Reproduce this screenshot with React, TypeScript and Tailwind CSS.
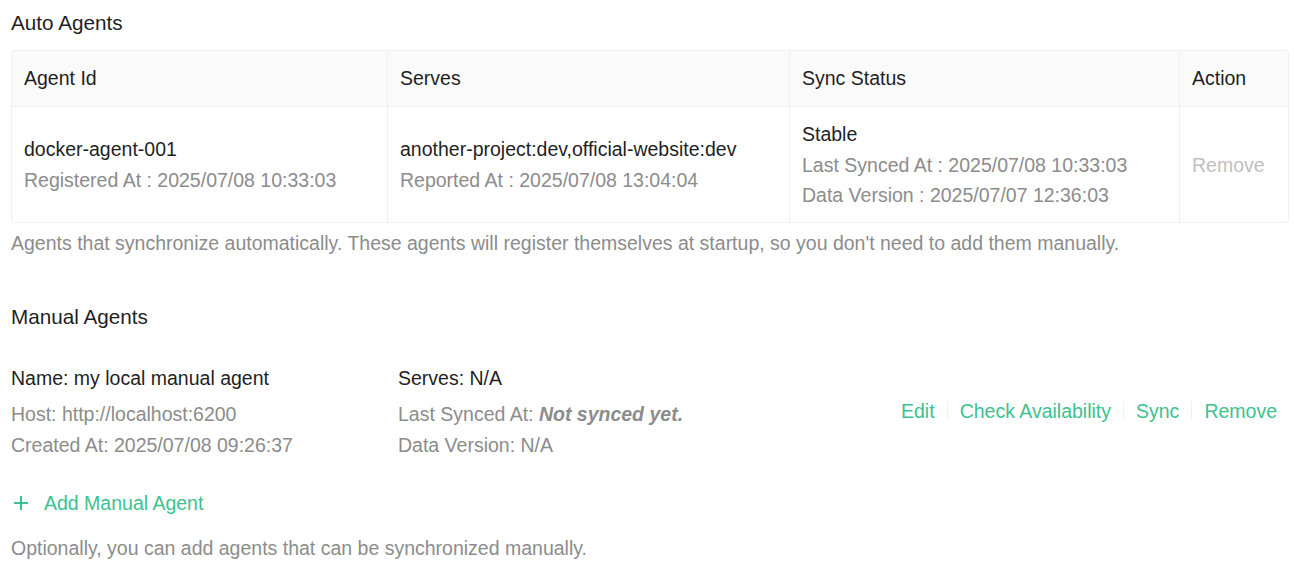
const font = { fontFamily: "'Liberation Sans', Arial, sans-serif" };

const autoAgents = [
  {
    id: "docker-agent-001",
    registeredAt: "2025/07/08 10:33:03",
    serves: "another-project:dev,official-website:dev",
    reportedAt: "2025/07/08 13:04:04",
    status: "Stable",
    lastSyncedAt: "2025/07/08 10:33:03",
    dataVersion: "2025/07/07 12:36:03",
  },
];

function Cell({ children, last = false, head = false }: { children: React.ReactNode; last?: boolean; head?: boolean }) {
  return (
    <div
      className={`px-[12px] py-[12px] flex flex-col justify-center ${last ? "" : "border-r border-[#f0f0f0]"} ${head ? "bg-[#fafafa] h-[55px]" : ""}`}
    >
      {children}
    </div>
  );
}

function PlusIcon() {
  return (
    <svg width="16" height="16" viewBox="0 0 16 16" className="shrink-0">
      <path d="M8 1v14M1 8h14" stroke="#3dc28f" strokeWidth="2.2" />
    </svg>
  );
}

export default function App() {
  const links = ["Edit", "Check Availability", "Sync", "Remove"];
  return (
    <div className="min-h-screen bg-white px-[11px] pt-[7px] text-[19.5px] leading-[30.5px] text-[#1f1f1f]" style={font}>
      <h2 className="text-[20.7px] leading-[31px] font-normal">Auto Agents</h2>

      <div className="mt-[12px] w-[1278px] border border-[#f0f0f0] rounded-[3px] overflow-hidden">
        <div className="grid grid-cols-[376px_402px_390px_1fr] border-b border-[#f0f0f0]">
          <Cell head>Agent Id</Cell>
          <Cell head>Serves</Cell>
          <Cell head>Sync Status</Cell>
          <Cell head last>Action</Cell>
        </div>
        {autoAgents.map((a) => (
          <div key={a.id} className="grid grid-cols-[376px_402px_390px_1fr] h-[115px]">
            <Cell>
              <div>{a.id}</div>
              <div className="text-[#8c8c8c]">Registered At : {a.registeredAt}</div>
            </Cell>
            <Cell>
              <div>{a.serves}</div>
              <div className="text-[#8c8c8c]">Reported At : {a.reportedAt}</div>
            </Cell>
            <Cell>
              <div>{a.status}</div>
              <div className="text-[#8c8c8c]">Last Synced At : {a.lastSyncedAt}</div>
              <div className="text-[#8c8c8c]">Data Version : {a.dataVersion}</div>
            </Cell>
            <Cell last>
              <span className="text-[#bfbfbf]">Remove</span>
            </Cell>
          </div>
        ))}
      </div>
      <p className="mt-[5px] text-[#8c8c8c]">
        Agents that synchronize automatically. These agents will register themselves at startup, so you don't need to add them manually.
      </p>

      <h2 className="mt-[42px] text-[20.7px] leading-[31px] font-normal">Manual Agents</h2>

      <div className="mt-[31px] w-[1278px] flex items-center">
        <div className="w-[387px]">
          <div>Name: my local manual agent</div>
          <div className="mt-[6px] text-[#8c8c8c]">Host: http://localhost:6200</div>
          <div className="text-[#8c8c8c]">Created At: 2025/07/08 09:26:37</div>
        </div>
        <div className="flex-1">
          <div>Serves: N/A</div>
          <div className="mt-[6px] text-[#8c8c8c]">
            Last Synced At: <em className="font-bold">Not synced yet.</em>
          </div>
          <div className="text-[#8c8c8c]">Data Version: N/A</div>
        </div>
        <div className="flex items-center pr-[12px] text-[#3dc28f]">
          {links.map((l, i) => (
            <div key={l} className="flex items-center">
              {i > 0 && <span className="mx-[12px] h-[20px] w-px bg-[#f0f0f0]" />}
              <span className="cursor-pointer">{l}</span>
            </div>
          ))}
        </div>
      </div>

      <button className="mt-[28px] flex items-center gap-[15px] pl-[2px] text-[#3dc28f]">
        <PlusIcon />
        <span>Add Manual Agent</span>
      </button>
      <p className="mt-[14px] text-[#8c8c8c]">Optionally, you can add agents that can be synchronized manually.</p>
    </div>
  );
}
